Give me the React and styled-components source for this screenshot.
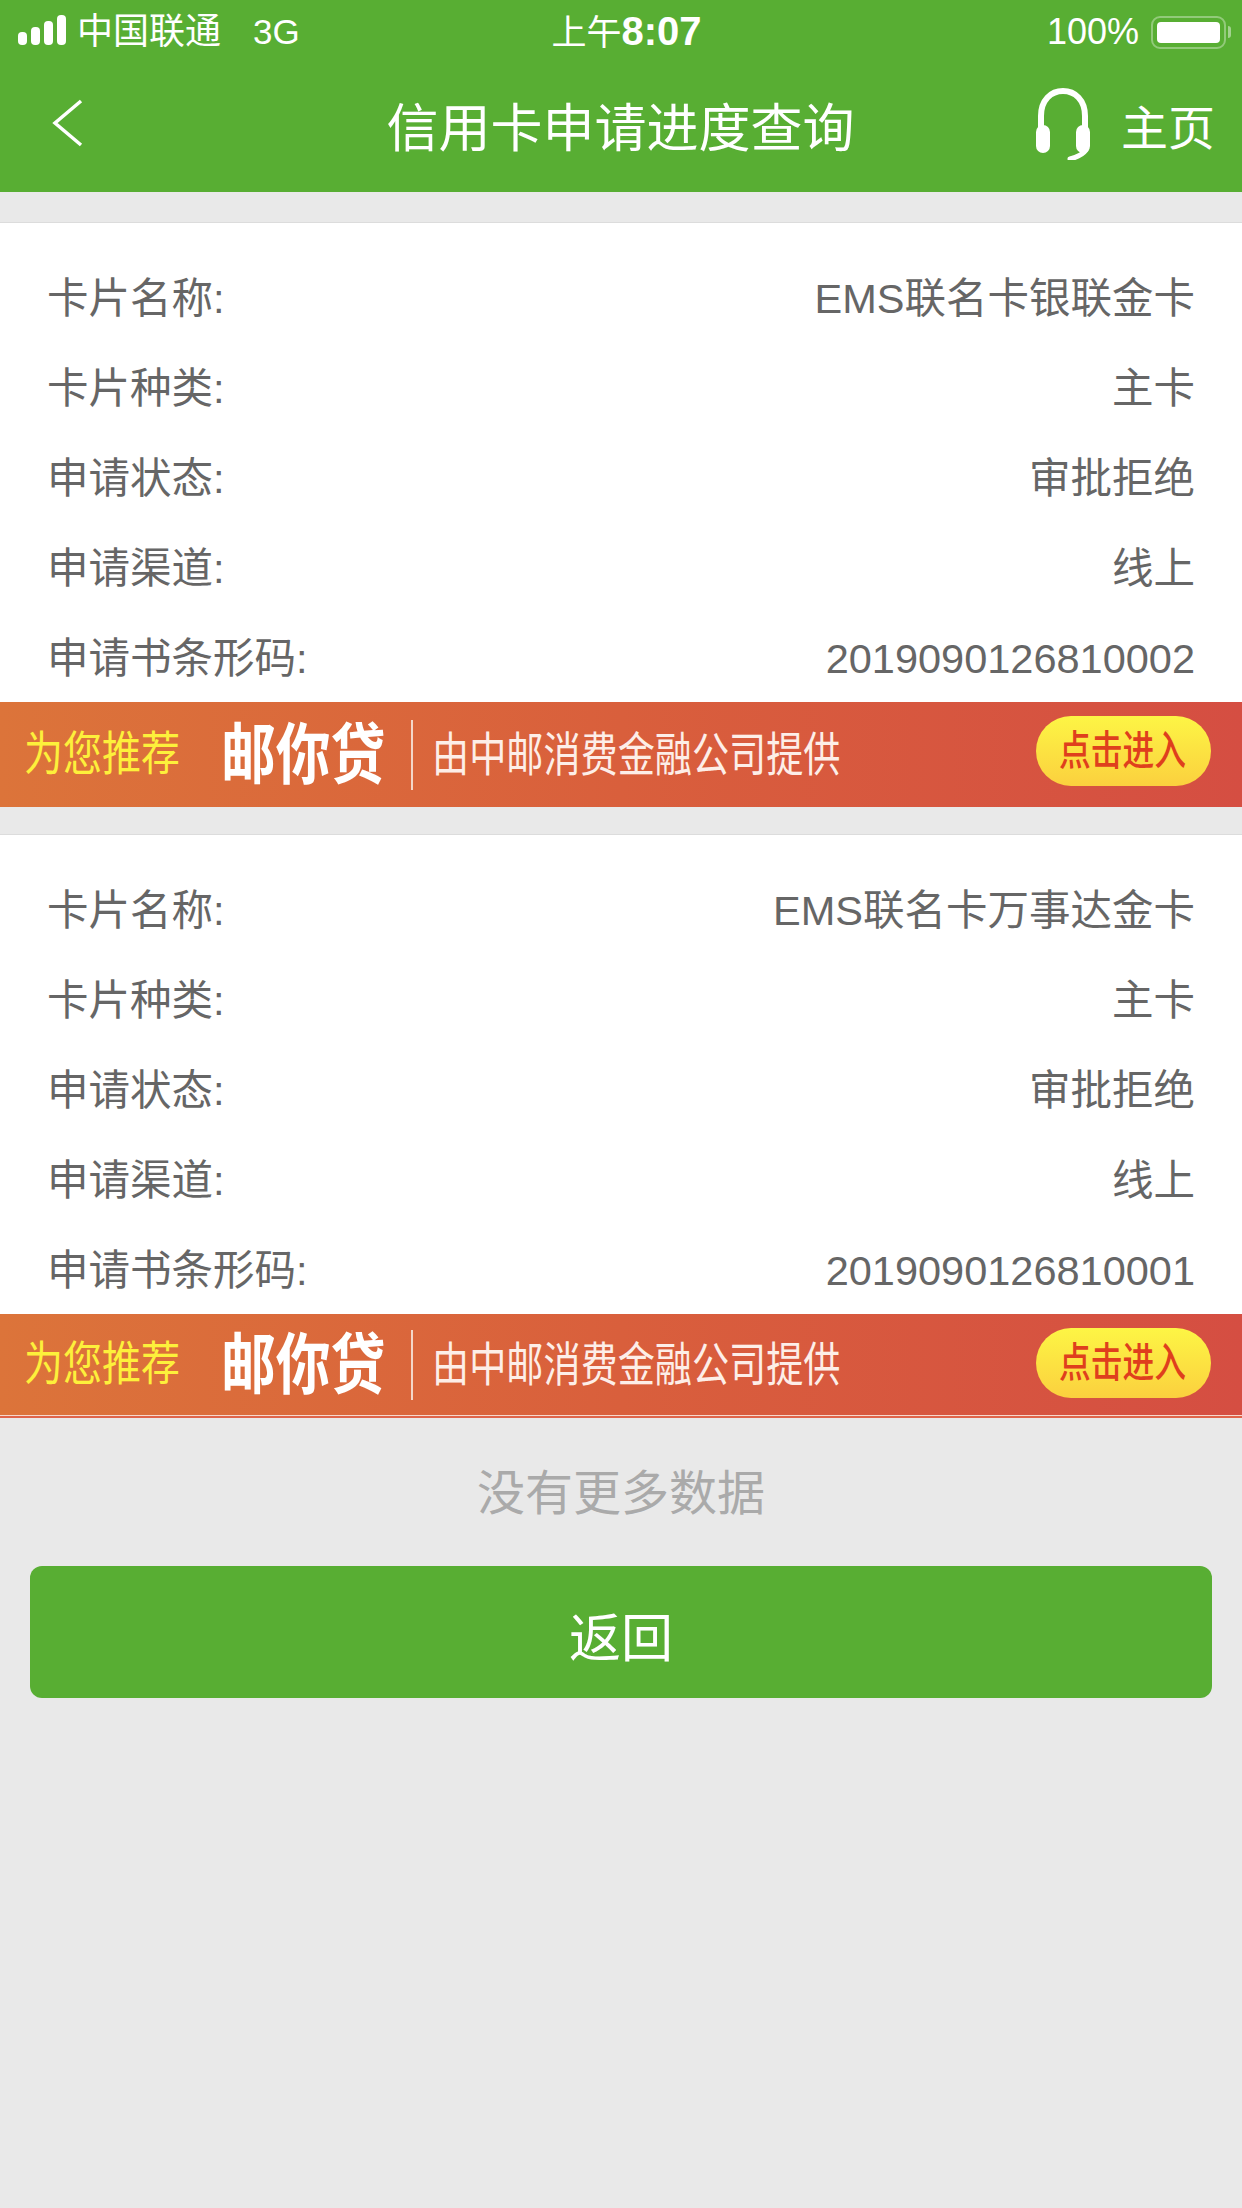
import styled, { createGlobalStyle } from "styled-components"

const GlobalStyle = createGlobalStyle`
    html, body {
        margin: 0;
        padding: 0;
        background-color: #e9e9e9;
    }
    * {
        box-sizing: border-box;
    }
`

const applications = [
    { name: "EMS联名卡银联金卡", code: "2019090126810002" },
    { name: "EMS联名卡万事达金卡", code: "2019090126810001", underline: true },
]

function Signal() {
    return (
        <SignalBars>
            <Bar $h={13} />
            <Bar $h={18} />
            <Bar $h={24} />
            <Bar $h={30} />
        </SignalBars>
    )
}

function Headset() {
    return (
        <svg width="56" height="72" viewBox="0 0 56 72" fill="none">
            <path d="M6 40V28C6 12 16 3 28 3s22 9 22 25v12" stroke="#fff" strokeWidth="6" />
            <rect x="1" y="37" width="14" height="28" rx="7" fill="#fff" />
            <rect x="41" y="37" width="14" height="28" rx="7" fill="#fff" />
            <path d="M51 62c-3 4-8 7-16 9" stroke="#fff" strokeWidth="5" strokeLinecap="round" />
        </svg>
    )
}

function Banner({ underline }) {
    return (
        <BannerBox $underline={underline}>
            <Recommend><span>为您推荐</span></Recommend>
            <Brand><span>邮你贷</span></Brand>
            <Divider />
            <Provider><span>由中邮消费金融公司提供</span></Provider>
            <Enter><span>点击进入</span></Enter>
        </BannerBox>
    )
}

function Row({ label, value }) {
    return (
        <RowBox>
            <span>{label}</span>
            <span>{value}</span>
        </RowBox>
    )
}

export default function App() {
    return (
        <Page>
            <GlobalStyle />
            <Header>
                <StatusBar>
                    <Carrier>
                        <Signal />
                        <span>中国联通</span>
                        <Network>3G</Network>
                    </Carrier>
                    <Time>上午<b>8:07</b></Time>
                    <BatteryBox>
                        <span>100%</span>
                        <Battery><BatteryFill /></Battery>
                        <BatteryTip />
                    </BatteryBox>
                </StatusBar>
                <NavBar>
                    <BackButton>
                        <svg width="32" height="48" viewBox="0 0 32 48" fill="none">
                            <path d="M29 2L3 24L29 46" stroke="#fff" strokeWidth="3.5" />
                        </svg>
                    </BackButton>
                    <Title>信用卡申请进度查询</Title>
                    <HomeLink>
                        <Headset />
                        <span>主页</span>
                    </HomeLink>
                </NavBar>
            </Header>
            <Cards>
                {applications.map((item) => (
                    <Card key={item.code}>
                        <Rows>
                            <Row label="卡片名称:" value={item.name} />
                            <Row label="卡片种类:" value="主卡" />
                            <Row label="申请状态:" value="审批拒绝" />
                            <Row label="申请渠道:" value="线上" />
                            <Row label="申请书条形码:" value={item.code} />
                        </Rows>
                        <Banner underline={item.underline} />
                    </Card>
                ))}
            </Cards>
            <NoMore>没有更多数据</NoMore>
            <BackAction>返回</BackAction>
        </Page>
    )
}

const Page = styled.div`
    width: 1242px;
    min-height: 2208px;
    background-color: #e9e9e9;
    font-family: "Liberation Sans", "Noto Sans CJK SC", sans-serif;
    overflow: hidden;
`
const Header = styled.header`
    height: 192px;
    background-color: #58ae33;
    color: white;
`
const StatusBar = styled.div`
    height: 60px;
    display: grid;
    grid-template-columns: 1fr auto 1fr;
    align-items: center;
    padding: 2px 11px 0 18px;
    font-size: 36px;
    line-height: 58px;
`
const Carrier = styled.div`
    display: flex;
    align-items: center;
`
const SignalBars = styled.div`
    display: flex;
    align-items: flex-end;
    gap: 4px;
    height: 30px;
    margin: -5px 11px 0 0;
`
const Bar = styled.i`
    display: block;
    width: 9px;
    height: ${(props) => props.$h}px;
    border-radius: 4px;
    background-color: white;
`
const Network = styled.span`
    margin-left: 32px;
    font-size: 35px;
`
const Time = styled.div`
    font-size: 35px;
    margin-left: 4px;

    b {
        font-size: 40px;
        font-weight: 700;
    }
`
const BatteryBox = styled.div`
    display: flex;
    align-items: center;
    justify-content: flex-end;
    font-size: 36px;
`
const Battery = styled.div`
    width: 75px;
    height: 33px;
    margin-left: 12px;
    padding: 4px;
    border: 2px solid rgba(255, 255, 255, 0.35);
    border-radius: 9px;
`
const BatteryFill = styled.div`
    width: 100%;
    height: 100%;
    border-radius: 4px;
    background-color: white;
`
const BatteryTip = styled.div`
    width: 3px;
    height: 12px;
    margin-left: 2px;
    border-radius: 0 4px 4px 0;
    background-color: rgba(255, 255, 255, 0.45);
`
const NavBar = styled.div`
    height: 132px;
    display: grid;
    grid-template-columns: 1fr auto 1fr;
    align-items: center;
    padding: 0 27px 4px 52px;
`
const BackButton = styled.div`
    display: flex;
    align-items: center;
    margin-bottom: 2px;
`
const Title = styled.div`
    font-size: 52px;
    margin-right: 26px;
`
const HomeLink = styled.div`
    display: flex;
    align-items: center;
    justify-content: flex-end;
    gap: 30px;
    font-size: 47px;
`
const Cards = styled.main`
    display: flex;
    flex-direction: column;
    gap: 27px;
    padding-top: 30px;
`
const Card = styled.section`
    background-color: white;
    border-top: 1px solid #dcdcdc;
`
const Rows = styled.div`
    padding: 29px 47px 0;
`
const RowBox = styled.div`
    height: 90px;
    display: flex;
    justify-content: space-between;
    font-size: 41.5px;
    line-height: 93px;
    color: #666;
`
const BannerBox = styled.div`
    height: ${(props) => (props.$underline ? "104px" : "105px")};
    display: flex;
    align-items: center;
    position: relative;
    padding-left: 24px;
    background: linear-gradient(90deg, #dc743a, #d95f3c 50%, #d54e42);
    border-bottom: ${(props) => (props.$underline ? "2px solid #e0644a" : "none")};
    box-shadow: ${(props) => (props.$underline ? "inset 0 -1px 0 #f6d9cf" : "none")};
    overflow: hidden;
    white-space: nowrap;

    span {
        display: inline-block;
        transform-origin: left center;
    }
`
const Recommend = styled.div`
    width: 197px;
    font-size: 47px;
    line-height: 60px;
    margin-bottom: 2px;
    color: #fdf03b;

    span {
        transform: scaleX(0.83);
    }
`
const Brand = styled.div`
    width: 190px;
    font-size: 66px;
    line-height: 80px;
    font-weight: 700;
    color: white;

    span {
        transform: scaleX(0.83);
    }
`
const Divider = styled.div`
    width: 2px;
    height: 70px;
    margin-right: 19px;
    background-color: #f4d6c8;
`
const Provider = styled.div`
    font-size: 47px;
    line-height: 60px;
    color: #fdeee8;

    span {
        transform: scaleX(0.79);
    }
`
const Enter = styled.div`
    position: absolute;
    right: 31px;
    top: 14px;
    width: 175px;
    height: 70px;
    padding-left: 23px;
    display: flex;
    align-items: center;
    border-radius: 35px;
    background: linear-gradient(180deg, #fdf545, #fbd03e);
    font-size: 41px;
    font-weight: 500;
    line-height: 64px;
    color: #df3f1d;

    span {
        transform: scaleX(0.775);
    }
`
const NoMore = styled.div`
    margin-top: 40px;
    text-align: center;
    font-size: 48px;
    line-height: 72px;
    color: #aaa;
`
const BackAction = styled.button`
    display: block;
    width: 1182px;
    height: 132px;
    margin: 36px 30px 0;
    padding: 4px 0 0;
    border: none;
    border-radius: 12px;
    background-color: #58ae33;
    color: white;
    font-family: inherit;
    font-size: 52px;
`
